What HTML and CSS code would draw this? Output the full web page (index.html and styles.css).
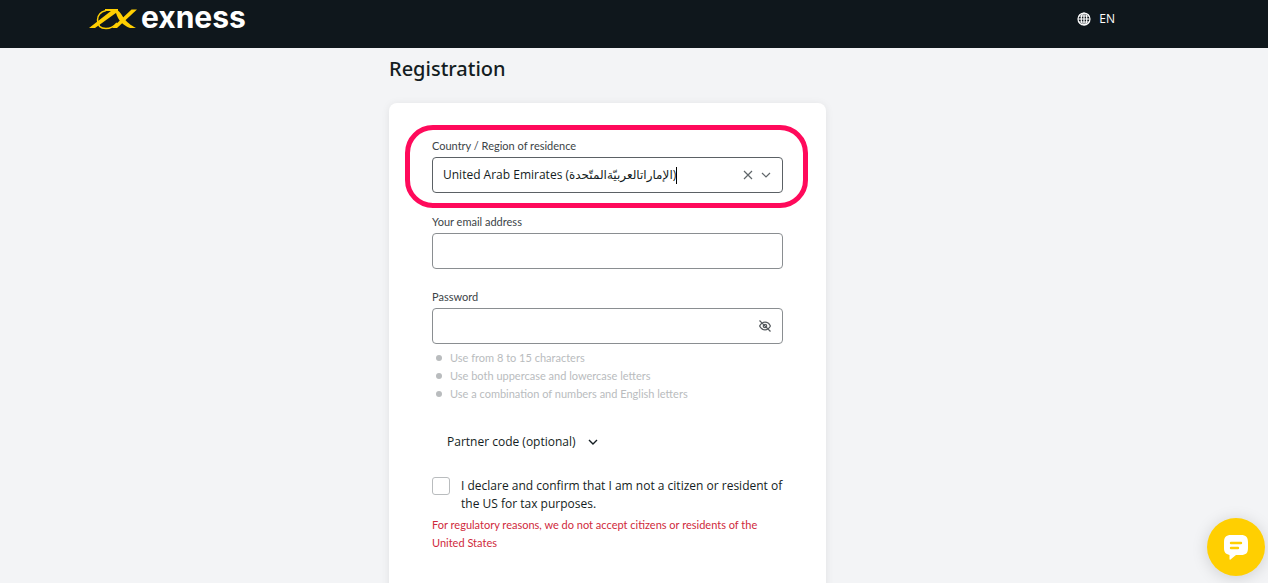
FILE: index.html
```
<!DOCTYPE html>
<html lang="en">
<head>
    <meta charset="UTF-8">
    <meta name="viewport" content="width=device-width, initial-scale=1.0">
    <title>Registration</title>
    <link rel="stylesheet" href="styles.css">
</head>
<body>
    <header class="header">
        <div class="header-inner">
            <a class="logo" href="#">
                <svg class="logo-mark" width="48" height="22" viewBox="0 0 48 22">
                    <path d="M0 20H6L29 3.500V1H24.500z" fill="#ffcf01"/>
                    <path d="M23 20H28L48 1.500H42.500z" fill="#ffcf01"/>
                    <path d="M26 1C30 2 32 6 34.500 9.500C37 13.500 42 17.500 47 20H41C34 17.500 29 12 27 5z" fill="#ffcf01"/>
                    <path d="M28 2H16" fill="none" stroke="#ffcf01" stroke-width="2"/>
                    <path d="M17 2.500C11 4 8.500 8 8.500 12C8.500 18 12 20.500 17 20.500C21 20.500 25 18.500 28 15" fill="none" stroke="#ffcf01" stroke-width="1.500"/>
                </svg>
                <span class="logo-text">exness</span>
            </a>
            <button class="lang" type="button">
                <svg width="14" height="14" viewBox="0 0 14 14" fill="none" stroke="#fff" stroke-width="1.200">
                    <circle cx="7" cy="7" r="6"/>
                    <ellipse cx="7" cy="7" rx="2.800" ry="6"/>
                    <path d="M7 1v12M1 7h12M2 4h10M2 10h10"/>
                </svg>
                EN
            </button>
        </div>
    </header>

    <main class="main">
        <h1>Registration</h1>

        <form class="card">
            <div class="field highlight">
                <label for="country">Country / Region of residence</label>
                <div class="input-box focused">
                    <input class="country" id="country" type="text" role="combobox" aria-expanded="false" value="United Arab Emirates (الإماراتالعربيّةالمتّحدة)">
                    <span class="caret"></span>
                    <div class="box-buttons">
                        <button class="icon-button" type="button" aria-label="Clear">
                            <svg width="10" height="10" viewBox="0 0 10 10" stroke="#60666a" stroke-width="1.200">
                                <path d="M1 1l8 8M9 1l-8 8"/>
                            </svg>
                        </button>
                        <button class="icon-button" type="button" aria-label="Open list">
                            <svg width="10" height="10" viewBox="0 0 10 10" fill="none" stroke="#60666a" stroke-width="1.200">
                                <path d="M1 3l4 4 4-4"/>
                            </svg>
                        </button>
                    </div>
                </div>
            </div>

            <div class="field">
                <label for="email">Your email address</label>
                <div class="input-box">
                    <input id="email" type="email">
                </div>
            </div>

            <div class="field">
                <label for="password">Password</label>
                <div class="input-box">
                    <input id="password" type="password">
                    <div class="box-buttons">
                        <button class="icon-button" type="button" aria-label="Show password">
                            <svg width="12" height="12" viewBox="0 0 12 12" fill="none" stroke="#565b5f" stroke-width="1.200">
                                <path d="M.600 6C1.900 3.300 3.700 2.200 6 2.200s4.100 1.100 5.400 3.800C10.100 8.700 8.300 9.800 6 9.800S1.900 8.700.600 6z"/>
                                <circle cx="6" cy="6" r="1.700"/>
                                <path d="M.500.500l11 11"/>
                            </svg>
                        </button>
                    </div>
                </div>
                <ul class="rules">
                    <li>Use from 8 to 15 characters</li>
                    <li>Use both uppercase and lowercase letters</li>
                    <li>Use a combination of numbers and English letters</li>
                </ul>
            </div>

            <button class="partner" type="button">
                Partner code (optional)
                <svg width="10" height="8" viewBox="0 0 10 8" fill="none" stroke="#141d22" stroke-width="1.400">
                    <path d="M1 2l4 4 4-4"/>
                </svg>
            </button>

            <div class="declare">
                <input id="declare" type="checkbox">
                <label for="declare">I declare and confirm that I am not a citizen or resident of the US for tax purposes.</label>
            </div>
            <p class="error">For regulatory reasons, we do not accept citizens or residents of the United States</p>
        </form>
    </main>

    <button class="chat" type="button" aria-label="Chat">
        <svg width="26" height="26" viewBox="0 0 26 26">
            <path d="M8 1h10c5 0 7 2.500 7 7v6c0 5-2 7-7 7h-5l-5.500 4.500c-.500.400-1 .200-1-.500V21C2.500 20 1 18 1 14V8c0-4.500 2-7 7-7z" fill="#fff"/>
            <path d="M8 9h10M8 14h7" stroke="#ffcf01" stroke-width="2.400" stroke-linecap="round"/>
        </svg>
    </button>
</body>
</html>
```

FILE: styles.css
```
* {
    box-sizing: border-box;
}
body {
    margin: 0;
    background-color: #f3f4f6;
    color: #141d22;
    font-family: "Open Sans", "DejaVu Sans", sans-serif;
    font-size: 12px;
    line-height: 18px;
}
button {
    padding: 0;
    border: none;
    background: none;
    color: inherit;
    font: inherit;
    cursor: pointer;
}

/* header */
.header {
    height: 48px;
    padding-right: 53px;
    background-color: #0f171c;
}
.header-inner {
    display: flex;
    justify-content: space-between;
    align-items: center;
    max-width: 1037px;
    height: 38px;
    margin: 0 auto;
}
.logo {
    display: flex;
    align-items: center;
    gap: 4px;
    color: #fff;
    font-family: Inter, sans-serif;
    font-size: 30px;
    font-weight: 700;
    line-height: 32px;
    text-decoration: none;
}
.logo-text {
    padding-bottom: 4px;
}
.lang {
    display: flex;
    align-items: center;
    gap: 8px;
    padding-right: 11px;
    color: #fff;
    font-weight: 500;
}

/* registration form */
.main {
    padding: 6px 53px 0 0;
}
h1 {
    max-width: 437px;
    margin: 0 auto 19px;
    font-family: "Noto Sans", sans-serif;
    font-size: 20px;
    font-weight: 500;
    line-height: 30px;
}
.card {
    max-width: 437px;
    min-height: 520px;
    margin: 0 auto;
    padding: 22px 43px 40px;
    background-color: #fff;
    border-radius: 8px;
    box-shadow: 0 1px 8px rgba(0, 0, 0, 0.08);
}
.field {
    margin-bottom: 19px;
}
.field label {
    display: block;
    margin-bottom: 2px;
    color: #3c4347;
}
.field label,
.rules,
.error {
    font-family: Lato, sans-serif;
    font-size: 11px;
}
.highlight {
    margin: 0 -25px 5px -27px;
    padding: 7px 20px 10px 22px;
    border: 5px solid #ff0a5b;
    border-radius: 28px;
}
.input-box {
    display: flex;
    align-items: center;
    height: 36px;
    padding: 0 11px 0 10px;
    border: 1px solid #8a8e91;
    border-radius: 4px;
}
.focused {
    border-color: #5b6165;
}
.input-box input {
    flex: 1;
    min-width: 0;
    padding: 0;
    border: none;
    outline: none;
    background: none;
    color: inherit;
    font: inherit;
}
.input-box .country {
    flex: none;
    field-sizing: content;
    max-width: 280px;
}
.caret {
    width: 1px;
    height: 17px;
    background-color: #000;
}
.box-buttons {
    display: flex;
    gap: 8px;
    margin-left: auto;
}
.icon-button {
    display: flex;
}
.rules {
    margin: 5px 0 0;
    padding: 0 0 0 4px;
    color: #b9bcbe;
    list-style: none;
}
.rules li {
    display: flex;
    align-items: center;
    gap: 8px;
}
.rules li::before {
    content: "";
    width: 6px;
    height: 6px;
    border-radius: 50%;
    background-color: #b9bcbe;
}
.partner {
    display: flex;
    align-items: center;
    gap: 12px;
    margin: 30px 0 26px 15px;
}
.declare {
    display: flex;
    align-items: flex-start;
    gap: 11px;
}
.declare input {
    appearance: none;
    flex: none;
    width: 18px;
    height: 18px;
    margin: 0;
    border: 1px solid #b9bcbe;
    border-radius: 3px;
}
.error {
    margin: 3px 0 0;
    color: #cf2a3c;
}

/* chat button */
.chat {
    position: fixed;
    right: 3px;
    bottom: 7px;
    display: flex;
    justify-content: center;
    align-items: center;
    width: 58px;
    height: 58px;
    border-radius: 50%;
    background-color: #ffcf01;
    box-shadow: 0 2px 16px rgba(0, 0, 0, 0.15);
}
```
